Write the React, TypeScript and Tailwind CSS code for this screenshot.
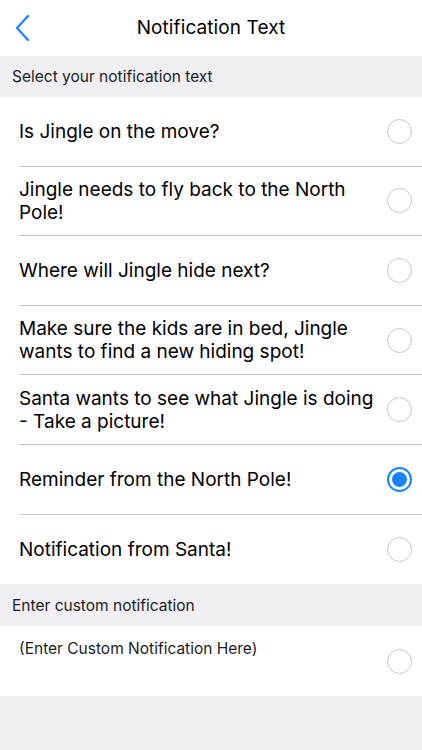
import { useState } from 'react';

const options = [
    'Is Jingle on the move?',
    'Jingle needs to fly back to the North Pole!',
    'Where will Jingle hide next?',
    'Make sure the kids are in bed, Jingle wants to find a new hiding spot!',
    'Santa wants to see what Jingle is doing - Take a picture!',
    'Reminder from the North Pole!',
    'Notification from Santa!',
];

function Radio({ on }: { on: boolean }) {
    if (on) {
        return (
            <span className="flex items-center justify-center w-[25px] h-[25px] rounded-full border-2 border-[#1a82fb] shrink-0">
                <span className="w-[15px] h-[15px] rounded-full bg-[#1a82fb]" />
            </span>
        );
    }
    return <span className="block w-[25px] h-[25px] rounded-full border border-[#c8c8cc] shrink-0" />;
}

export default function App() {
    const [selected, setSelected] = useState(5);

    return (
        <div className="w-[422px] h-[750px] bg-[#efeff4] font-['Inter',sans-serif] text-black overflow-hidden">
            {/* Nav bar */}
            <div className="relative h-[56px] bg-white flex items-center justify-center">
                <button type="button" className="absolute left-[14px] top-[14px]">
                    <svg width="18" height="28" viewBox="0 0 18 28" fill="none">
                        <path d="M14 2 L3 14 L14 26" stroke="#1a82fb" strokeWidth="2.2" strokeLinecap="round" strokeLinejoin="round" />
                    </svg>
                </button>
                <h1 className="text-[19px] m-0 font-normal tracking-[0.1px]">Notification Text</h1>
            </div>

            {/* Section header */}
            <div className="h-[41px] flex items-center px-3 text-[15.5px] text-[#1c1c1e]">
                Select your notification text
            </div>

            <div className="bg-white">
                {options.map((text, i) => (
                    <button
                        key={text}
                        type="button"
                        onClick={() => setSelected(i)}
                        className="w-full block pl-[19px] text-left"
                    >
                        <div
                            className={`h-[69.6px] flex items-center justify-between pr-[10px] ${
                                i < options.length - 1 ? 'border-b border-[#c8c7cc]' : ''
                            }`}
                        >
                            <span className="text-[19px] leading-[23px] pr-3">{text}</span>
                            <Radio on={selected === i} />
                        </div>
                    </button>
                ))}
            </div>

            {/* Custom section */}
            <div className="h-[42px] flex items-center px-3 text-[15.5px] text-[#1c1c1e]">
                Enter custom notification
            </div>
            <div className="bg-white h-[70px] flex justify-between pl-[19px] pr-[10px]">
                <span className="text-[15.5px] text-[#1c1c1e] pt-[11px]">(Enter Custom Notification Here)</span>
                <span className="flex self-end mb-[22px]">
                    <Radio on={false} />
                </span>
            </div>
        </div>
    );
}
